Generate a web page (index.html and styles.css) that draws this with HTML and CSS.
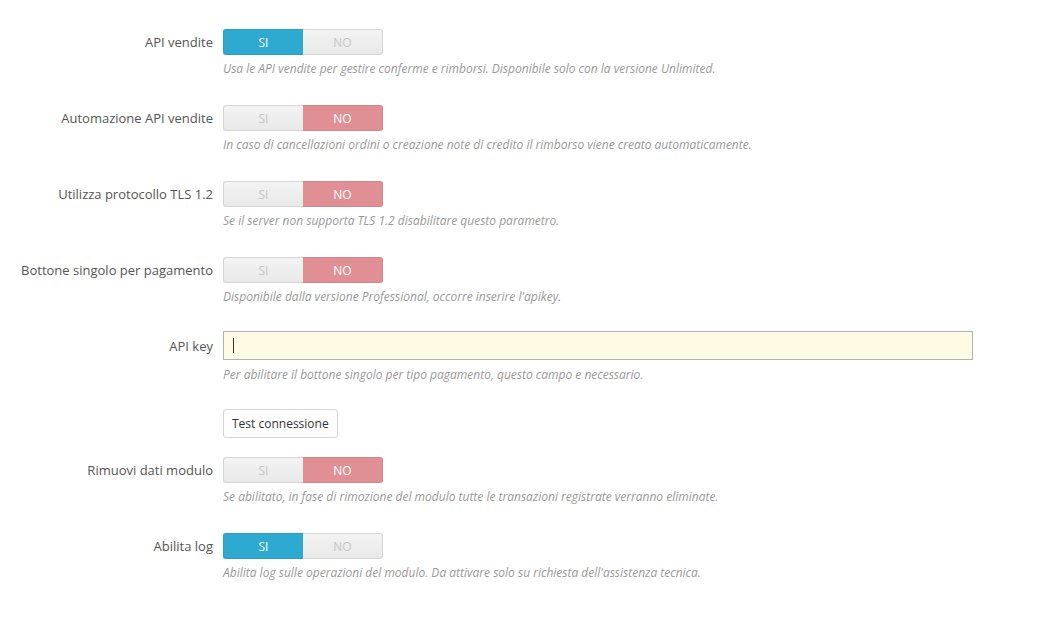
FILE: index.html
```html
<!DOCTYPE html>
<html lang="it">
<head>
<meta charset="utf-8">
<link rel="stylesheet" href="styles.css">
</head>
<body>
<form class="form">
  <div class="group">
    <label class="label">API vendite</label>
    <div class="switch"><span class="opt on-yes">SI</span><span class="opt">NO</span></div>
    <p class="help">Usa le API vendite per gestire conferme e rimborsi. Disponibile solo con la versione Unlimited.</p>
  </div>
  <div class="group">
    <label class="label">Automazione API vendite</label>
    <div class="switch"><span class="opt">SI</span><span class="opt on-no">NO</span></div>
    <p class="help">In caso di cancellazioni ordini o creazione note di credito il rimborso viene creato automaticamente.</p>
  </div>
  <div class="group">
    <label class="label">Utilizza protocollo TLS 1.2</label>
    <div class="switch"><span class="opt">SI</span><span class="opt on-no">NO</span></div>
    <p class="help">Se il server non supporta TLS 1.2 disabilitare questo parametro.</p>
  </div>
  <div class="group">
    <label class="label">Bottone singolo per pagamento</label>
    <div class="switch"><span class="opt">SI</span><span class="opt on-no">NO</span></div>
    <p class="help">Disponibile dalla versione Professional, occorre inserire l'apikey.</p>
  </div>
  <div class="group group-input">
    <label class="label">API key</label>
    <div class="input"><span class="caret"></span></div>
    <p class="help">Per abilitare il bottone singolo per tipo pagamento, questo campo e necessario.</p>
  </div>
  <div class="group group-btn">
    <span class="label"></span>
    <div><button type="button" class="btn">Test connessione</button></div>
  </div>
  <div class="group">
    <label class="label">Rimuovi dati modulo</label>
    <div class="switch"><span class="opt">SI</span><span class="opt on-no">NO</span></div>
    <p class="help">Se abilitato, in fase di rimozione del modulo tutte le transazioni registrate verranno eliminate.</p>
  </div>
  <div class="group">
    <label class="label">Abilita log</label>
    <div class="switch"><span class="opt on-yes">SI</span><span class="opt">NO</span></div>
    <p class="help">Abilita log sulle operazioni del modulo. Da attivare solo su richiesta dell'assistenza tecnica.</p>
  </div>
</form>
</body>
</html>
```

FILE: styles.css
```css
html, body {
  margin: 0;
  padding: 0;
  background: #fff;
}
body {
  font-family: "Open Sans", "Liberation Sans", sans-serif;
  color: #555;
}
.form {
  padding-top: 29px;
}
.group {
  display: grid;
  grid-template-columns: 213px 750px;
  column-gap: 10px;
  align-items: center;
  margin-bottom: 27px;
}
.label {
  text-align: right;
  font-size: 13px;
  line-height: 18px;
  color: #555;
}
.switch {
  display: flex;
  width: 160px;
  height: 26px;
}
.opt {
  flex: 1;
  display: flex;
  align-items: center;
  justify-content: center;
  font-size: 12px;
  color: #c5c5c5;
  background: linear-gradient(#f3f3f3, #e9e9e9);
  border: 1px solid #d6d6d6;
  box-sizing: border-box;
}
.opt:first-child {
  border-radius: 3px 0 0 3px;
  border-right: none;
}
.opt:last-child {
  border-radius: 0 3px 3px 0;
  border-left: none;
}
.on-yes {
  background: #2eaad0;
  border-color: #2a9fc3;
  color: #fff;
}
.on-no {
  background: #e08f95;
  border-color: #d4838a;
  color: #fff;
}
.help {
  grid-column: 2;
  margin: 5px 0 0;
  font-size: 12px;
  line-height: 18px;
  font-style: italic;
  color: #999;
}
.input {
  width: 750px;
  height: 29px;
  box-sizing: border-box;
  background: #fffae3;
  border: 1px solid #a3b8bd;
  display: flex;
  align-items: center;
  padding-left: 9px;
}
.caret {
  width: 1px;
  height: 15px;
  background: #333;
}
.group-input {
  margin-top: -2px;
  margin-bottom: 25px;
}
.group-input .help {
  margin-top: 6px;
}
.group-btn {
  margin-bottom: 19px;
}
.btn {
  display: block;
  height: 29px;
  padding: 0 8px;
  background: #fff;
  border: 1px solid #d6d6d6;
  border-radius: 3px;
  font-family: "Open Sans", "Liberation Sans", sans-serif;
  font-size: 12px;
  color: #333;
}
```
